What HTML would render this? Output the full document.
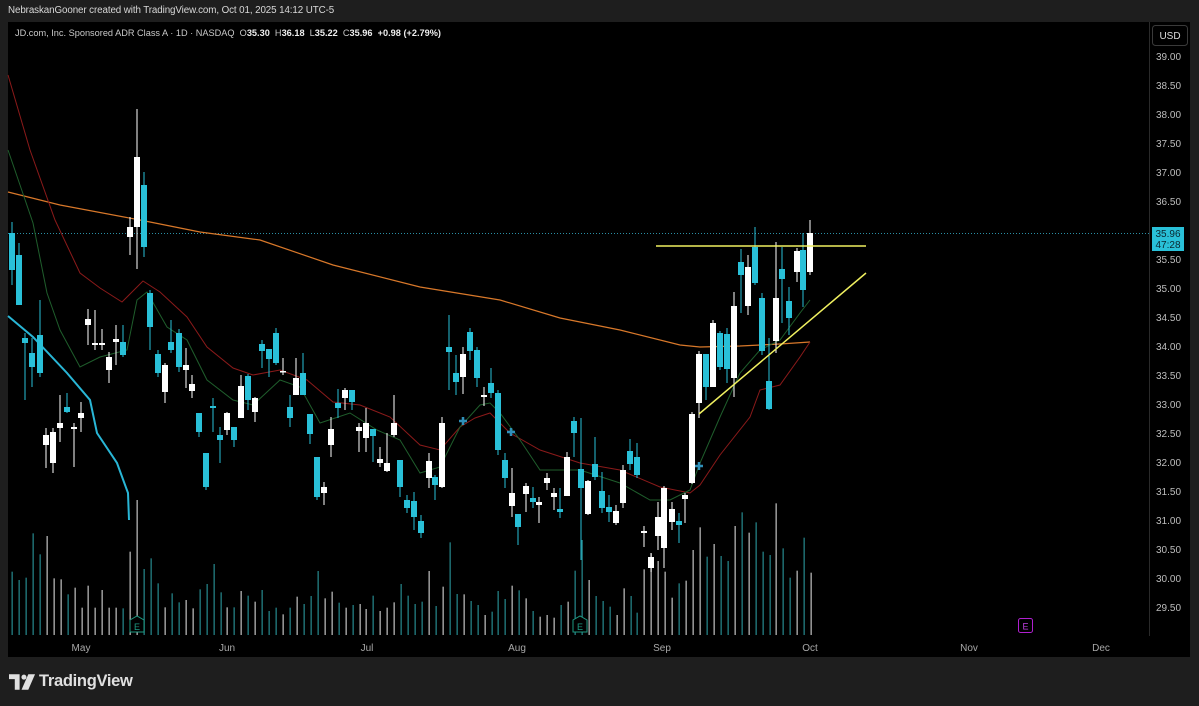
<!DOCTYPE html>
<html><head><meta charset="utf-8"><style>
html,body{margin:0;padding:0;background:#1e1e1e;width:1199px;height:706px;overflow:hidden;font-family:"Liberation Sans",sans-serif}
#top{position:absolute;left:8px;top:5px;font-size:9.8px;color:#d8d8d8;letter-spacing:-0.1px}
#panel{position:absolute;left:8px;top:22px;width:1182px;height:635px;background:#000}
#legend{position:absolute;left:15px;top:28px;font-size:9.2px;color:#c8c8c8}
#legend b{color:#eee;font-weight:bold}
#logo{position:absolute;left:39px;top:672px;font-size:16.5px;font-weight:bold;color:#e0e0e0;letter-spacing:-0.3px}
</style></head><body>
<div id="top">NebraskanGooner created with TradingView.com, Oct 01, 2025 14:12 UTC-5</div>
<div id="panel"></div>
<svg id="s" width="1199" height="706" style="position:absolute;left:0;top:0"></svg>
<div id="legend">JD.com, Inc. Sponsored ADR Class A · 1D · NASDAQ&nbsp; O<b>35.30</b>&nbsp; H<b>36.18</b>&nbsp; L<b>35.22</b>&nbsp; C<b>35.96</b>&nbsp; <b>+0.98 (+2.79%)</b></div>
<svg style="position:absolute;left:9px;top:674px" width="27" height="16" viewBox="0 0 28 16"><path d="M0 0H11V16H6V5H0Z" fill="#e0e0e0"/><circle cx="15.5" cy="3" r="2.6" fill="#e0e0e0"/><path d="M20 0H27L20 16H13Z" fill="#e0e0e0"/></svg>
<div id="logo">TradingView</div>
<script>
var s=document.getElementById('s'),h='';
var C='#29c0d8',W='#ffffff';
h+='<line x1="1149.5" y1="22" x2="1149.5" y2="636" stroke="#2a2a2a"/>';
h+='<rect x="1152.5" y="25.5" width="35" height="20" rx="3" fill="#000" stroke="#3a3a3a"/><text x="1170" y="39" fill="#ddd" font-size="10" text-anchor="middle">USD</text>';
for(var p=39;p>=29.5;p-=0.5){var y=56+(39-p)*58;if(Math.abs(y-233)<14)continue;h+='<text x="1156" y="'+(y+4)+'" fill="#bdbdbd" font-size="10">'+p.toFixed(2)+'</text>';}
[['May',81],['Jun',227],['Jul',367],['Aug',517],['Sep',662],['Oct',810],['Nov',969],['Dec',1101]].forEach(function(m){h+='<text x="'+m[1]+'" y="651" fill="#a8a8a8" font-size="10" text-anchor="middle">'+m[0]+'</text>';});
var v1=[215,240,233,100,163,108,235,238,283,263,323,257,323,270,323,323,325,155,0,207,175,250,322,280,307,300,325,268,252,192,277,322,322,273,287,305,270,333,323,343,323,290,312,288,213,295,275,308,323,315,312,327,287,333,323,307,252,287,312];
var v2=[305,213,318,260,127,282,283,303,315,345,335,273,297,257,271,295,333,350,345,353,315,305,212,120,240,288,303,320,345,265,288,338,208,160,183,215,293,250,242,150,82,170,132,168,183,78,37,98,67,155,165,10,145,233,212,113,218];
var cd=[[12,233,270,222,285,0],[19,255,305,243,305,0],[25,338,343,333,400,0],[32,353,367,338,387,0],[40,335,373,300,377,0],[46,435,445,428,468,1],[53,432,463,428,473,1],[60,423,428,395,442,1],[67,407,412,393,413,0],[74,427,429,423,467,1],[81,413,418,402,432,1],[88,319,325,309,345,1],[95,343,345,310,350,1],[102,343,345,329,350,1],[109,357,370,352,383,1],[116,339,342,325,365,1],[123,342,355,325,357,0],[130,227,237,217,255,1],[137,157,227,109,269,1],[144,185,247,172,257,0],[150,293,327,290,350,0],[158,354,373,350,377,0],[165,365,392,363,403,1],[171,342,350,320,353,0],[179,333,367,329,372,0],[186,365,370,348,388,1],[192,384,391,375,398,1],[199,413,432,413,437,0],[206,453,487,453,490,0],[213,406,408,398,432,0],[220,435,440,427,463,0],[227,413,430,412,435,1],[234,427,440,427,447,0],[241,386,418,375,418,1],[248,376,400,374,410,0],[255,398,412,397,422,1],[262,344,351,340,368,0],[269,349,359,349,377,0],[276,333,363,328,365,0],[283,371,372,358,375,1],[290,407,418,395,427,0],[296,378,395,358,395,1],[303,373,395,353,395,0],[310,414,434,414,444,0],[317,457,497,457,500,0],[324,487,493,482,505,1],[331,429,445,417,457,1],[338,403,408,389,418,0],[345,390,398,388,410,1],[352,390,402,390,410,0],[359,427,431,423,452,1],[366,423,438,408,452,1],[373,429,436,429,462,0],[380,459,463,447,467,1],[387,463,471,433,472,1],[394,423,435,395,437,1],[400,460,487,460,497,0],[407,500,508,495,513,0],[414,501,517,492,530,0],
[421,521,533,515,538,0],[429,461,478,453,488,1],[435,477,485,475,500,0],[442,423,487,417,488,1],[449,347,352,315,390,0],[456,373,382,355,395,0],[463,354,377,347,394,1],[470,332,351,328,360,0],[477,350,378,347,387,0],[484,395,397,387,406,1],[491,383,393,368,398,0],[498,393,450,390,455,0],[505,460,478,453,488,0],[512,493,506,468,517,1],[518,514,527,514,545,0],[526,486,494,483,512,1],[533,498,502,487,508,0],[539,502,505,497,523,1],[547,478,483,473,490,1],[554,493,497,488,510,1],[560,509,512,488,518,0],[567,457,496,452,496,1],[574,421,433,417,457,0],[581,469,488,418,560,0],[588,481,514,480,515,1],[595,464,477,437,480,0],[602,491,508,472,513,0],[609,507,512,495,522,0],[616,511,523,505,525,1],[623,470,503,465,508,1],[630,451,464,439,470,0],[637,457,475,443,478,0],[644,531,533,526,547,1],[651,557,568,553,572,1],[658,517,536,502,550,1],[664,488,548,486,568,1],[672,509,522,502,530,1],[679,521,525,513,543,0],[685,495,499,493,523,1],[692,414,483,412,484,1],[699,354,403,351,418,1],[706,354,387,354,400,0],[713,323,387,320,387,1],[720,333,367,331,370,0],[727,334,369,328,383,0],[734,306,378,292,397,1],[741,262,275,249,313,0],[748,267,306,255,315,1],[755,247,283,227,285,0],[762,298,351,293,355,0],[769,381,409,338,410,0],[776,298,341,242,353,1],[782,269,279,247,323,0],[789,301,318,287,335,0],[797,251,272,248,282,1],[803,250,290,233,307,0],[810,233,272,220,275,1]];
var vol=[];v1.forEach(function(z,i){vol.push([12+6.95*i,500+z/3]);});v2.forEach(function(z,i){vol.push([422+6.95*i,500+z/3]);});
vol.forEach(function(v){var best=cd[0];cd.forEach(function(c){if(Math.abs(c[0]-v[0])<Math.abs(best[0]-v[0]))best=c;});var col=best[5]?'#b5b5b5':'#237f85';var yt=v[1];h+='<rect x="'+(Math.round(v[0])-0.5)+'" y="'+yt+'" width="1.3" height="'+(635-yt)+'" fill="'+col+'"/>';});
h+='<line x1="8" y1="233.5" x2="1149" y2="233.5" stroke="#2a8fa5" stroke-width="1" stroke-dasharray="1,2"/>';
function pl(pts,col,w){h+='<polyline fill="none" stroke="'+col+'" stroke-width="'+w+'" points="'+pts.map(function(p){return p.join(',')}).join(' ')+'"/>';}
pl([[8,192],[60,205],[140,220],[200,232],[260,240],[333,265],[420,287],[500,300],[560,318],[620,330],[680,345],[700,347],[740,346],[780,344],[810,342]],'#d8782a',1.2);
pl([[8,75],[30,150],[55,220],[80,273],[100,288],[122,302],[143,281],[160,292],[187,317],[207,347],[233,368],[253,375],[280,370],[307,380],[333,402],[360,405],[390,417],[420,445],[440,450],[460,427],[475,418],[490,413],[510,433],[540,450],[580,463],[620,470],[660,487],[690,493],[700,485],[720,455],[750,417],[760,390],[780,385],[800,357],[810,342]],'#8b1a1a',1);
pl([[8,150],[20,185],[33,223],[47,293],[60,330],[80,367],[100,357],[127,350],[137,300],[147,292],[167,327],[187,340],[207,380],[233,400],[253,405],[280,380],[300,387],[320,423],[350,413],[377,430],[400,440],[420,473],[440,467],[460,427],[480,405],[490,403],[500,413],[520,440],[540,470],[580,470],[620,483],[650,500],[670,500],[690,490],[700,463],[720,417],[740,373],[760,350],[780,340],[800,313],[810,300]],'#1f5e2c',1);
pl([[8,316],[33,337],[67,373],[90,400],[97,433],[117,463],[128,493],[129,520]],'#29b6d6',2);
cd.forEach(function(c){var col=c[5]?W:C;h+='<rect x="'+(c[0]-0.5)+'" y="'+c[3]+'" width="1" height="'+(c[4]-c[3])+'" fill="'+col+'"/>';h+='<rect x="'+(c[0]-3)+'" y="'+c[1]+'" width="6" height="'+Math.max(1.5,c[2]-c[1])+'" fill="'+col+'"/>';});
h+='<line x1="656" y1="246" x2="866" y2="246" stroke="#f0f060" stroke-width="1.5"/><line x1="699" y1="414" x2="866" y2="273" stroke="#f0f060" stroke-width="1.5"/>';
[[463,421],[511,432],[699,466]].forEach(function(m){h+='<path d="M'+(m[0]-4)+' '+m[1]+'h8M'+m[0]+' '+(m[1]-4)+'v8" stroke="#2f8fb8" stroke-width="2.5"/>';});
function em(x,col){h+='<path d="M'+(x-7)+' 620 L'+x+' 616 L'+(x+7)+' 620 V632 H'+(x-7)+'Z" fill="#000" stroke="'+col+'" stroke-width="1"/><text x="'+x+'" y="630" fill="'+col+'" font-size="9" text-anchor="middle">E</text>';}
em(137,'#1e9a82');em(580,'#1e9a82');
h+='<rect x="1018.5" y="618.5" width="14" height="14" rx="2" fill="#000" stroke="#b020d0"/><text x="1025.5" y="629.5" fill="#c040e0" font-size="9" text-anchor="middle">E</text>';
h+='<rect x="1152" y="227" width="32" height="24" fill="#29c0d8"/><text x="1168" y="237" fill="#0a2630" font-size="10" text-anchor="middle">35.96</text><text x="1168" y="248" fill="#0a2630" font-size="10" text-anchor="middle">47:28</text>';
s.innerHTML=h;
</script>
</body></html>
